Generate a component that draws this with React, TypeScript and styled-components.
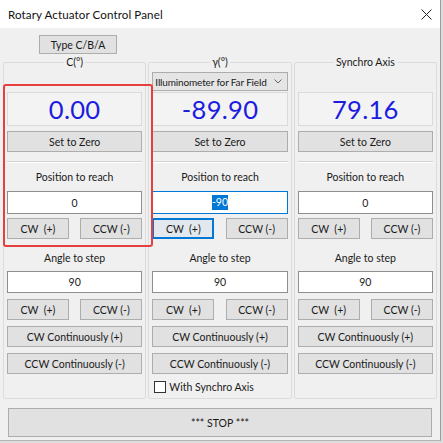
import React from "react";
import styled, { createGlobalStyle, css } from "styled-components";

const GlobalStyle = createGlobalStyle`
  html, body {
    margin: 0;
    padding: 0;
    background: #dcdcdc;
  }
  #root {
    width: 443px;
    height: 443px;
  }
  * { box-sizing: border-box; }
`;

const FONT = `"Lato", "Noto Sans", "DejaVu Sans", sans-serif`;

const Window = styled.div`
  position: relative;
  width: 441px;
  height: 441px;
  background: #f0f0f0;
  border-right: 1px solid #9d9d9d;
  border-bottom: 1px solid #b5b5b5;
  display: flex;
  flex-direction: column;
  font-family: ${FONT};
  color: #1a1a1a;
`;

const TitleBar = styled.div`
  height: 28px;
  flex: none;
  background: #ffffff;
  display: flex;
  align-items: center;
  justify-content: space-between;
  padding: 0 8px 0 8px;
`;

const Title = styled.span`
  font-size: 11.6px;
  color: #111;
  letter-spacing: 0.1px;
`;

const CloseGlyph = () => (
  <svg width="11" height="11" viewBox="0 0 11 11">
    <path d="M0.5 0.5 L10.5 10.5 M10.5 0.5 L0.5 10.5" stroke="#222" strokeWidth="1" fill="none" />
  </svg>
);

const Body = styled.div`
  flex: 1;
  display: flex;
  flex-direction: column;
  padding: 7px 3px 4px 3px;
`;

const TopRow = styled.div`
  display: flex;
  padding-left: 36px;
`;

const buttonBase = css`
  font-family: ${FONT};
  font-size: 10.5px;
  color: #1a1a1a;
  background: #e1e1e1;
  border: 1px solid #adadad;
  border-radius: 0;
  padding: 0;
  margin: 0;
  display: flex;
  align-items: center;
  justify-content: center;
  white-space: pre;
`;

const Button = styled.button<{ $w?: number; $h?: number; $focused?: boolean }>`
  ${buttonBase};
  width: ${(p) => (p.$w ? `${p.$w}px` : "100%")};
  height: ${(p) => p.$h ?? 21}px;
  flex: none;
  ${(p) =>
    p.$focused &&
    css`
      border-color: #0078d7;
      box-shadow: inset 0 0 0 1px #0078d7;
      background: #e3e8ee;
    `}
`;

const GroupRow = styled.div`
  display: flex;
  gap: 2px;
  margin-top: 1px;
`;

const Group = styled.fieldset`
  flex: 1;
  min-width: 0;
  margin: 0;
  border: 1px solid #dcdcdc;
  border-radius: 2px;
  padding: 3px 3px 5px 3px;
  display: flex;
  flex-direction: column;
`;

const Legend = styled.legend`
  margin: 0 auto;
  padding: 0 2px;
  font-size: 10.5px;
  line-height: 14px;
  color: #1a1a1a;
`;

const Slot = styled.div`
  height: 19px;
  flex: none;
`;

const Dropdown = styled.div`
  height: 19px;
  flex: none;
  background: #e5e5e5;
  border: 1px solid #acacac;
  display: flex;
  align-items: center;
  justify-content: space-between;
  gap: 4px;
  padding: 0 5px 0 2px;
  font-size: 10px;
  letter-spacing: -0.15px;
  white-space: nowrap;
  overflow: hidden;
`;

const DropdownText = styled.span`
  overflow: hidden;
  min-width: 0;
`;

const Chevron = () => (
  <svg width="8" height="5" viewBox="0 0 8 5" style={{ flex: "none" }}>
    <path d="M0.5 0.5 L4 4 L7.5 0.5" stroke="#606060" strokeWidth="1" fill="none" />
  </svg>
);

const ValueBox = styled.div`
  margin-top: 1px;
  height: 34px;
  flex: none;
  background: #f3f3f3;
  border: 1px solid #dadada;
  display: flex;
  align-items: center;
  justify-content: center;
  font-size: 25.5px;
  color: #1c1ce0;
  letter-spacing: 0.3px;
`;

const Separator = styled.div`
  margin-top: 9px;
  height: 2px;
  flex: none;
  border-top: 1px solid #d2d2d2;
  border-bottom: 1px solid #ffffff;
`;

const Caption = styled.div<{ $top: number }>`
  margin-top: ${(p) => p.$top}px;
  height: 16px;
  line-height: 16px;
  text-align: center;
  font-size: 10.5px;
  flex: none;
`;

const TextBox = styled.div<{ $h: number; $focused?: boolean }>`
  height: ${(p) => p.$h}px;
  flex: none;
  background: #ffffff;
  border: 1px solid ${(p) => (p.$focused ? "#0078d7" : "#8e8e8e")};
  display: flex;
  align-items: center;
  justify-content: center;
  font-size: 10.5px;
`;

const Selected = styled.span`
  background: #0078d7;
  color: #ffffff;
  padding: 1px 0;
  line-height: 13px;
`;

const ButtonPair = styled.div<{ $top: number }>`
  margin-top: ${(p) => p.$top}px;
  display: flex;
  justify-content: space-between;
`;

const Stack = styled.div<{ $top: number }>`
  margin-top: ${(p) => p.$top}px;
  flex: none;
`;

const CheckRow = styled.label`
  margin-top: 7px;
  display: flex;
  align-items: center;
  gap: 3px;
  height: 12px;
  padding-left: 2px;
  font-size: 10.5px;
`;

const CheckSquare = styled.span`
  width: 12px;
  height: 12px;
  background: #ffffff;
  border: 1px solid #333333;
  flex: none;
`;

const StopButton = styled.button`
  ${buttonBase};
  margin: 9px 5px 0 5px;
  height: 29px;
  font-size: 10.5px;
`;

const Highlight = styled.div`
  position: absolute;
  left: 3px;
  top: 84px;
  width: 150px;
  height: 163px;
  border: 2px solid #e5403f;
  border-radius: 3px;
  pointer-events: none;
`;

type AxisProps = {
  title: string;
  value: string;
  position: string;
  step: string;
  dropdown?: string;
  focused?: boolean;
  synchroOption?: boolean;
};

const Axis: React.FC<AxisProps> = ({ title, value, position, step, dropdown, focused, synchroOption }) => (
  <Group>
    <Legend>{title}</Legend>
    {dropdown ? (
      <Dropdown>
        <DropdownText>{dropdown}</DropdownText>
        <Chevron />
      </Dropdown>
    ) : (
      <Slot />
    )}
    <ValueBox>{value}</ValueBox>
    <Stack $top={5}>
      <Button>Set to Zero</Button>
    </Stack>
    <Separator />
    <Caption $top={6}>Position to reach</Caption>
    <Stack $top={6}>
      <TextBox $h={23} $focused={focused}>
        {focused ? <Selected>{position}</Selected> : position}
      </TextBox>
    </Stack>
    <ButtonPair $top={4}>
      <Button $w={62} $focused={focused}>{"CW  (+)"}</Button>
      <Button $w={62}>CCW (-)</Button>
    </ButtonPair>
    <Caption $top={11}>Angle to step</Caption>
    <Stack $top={5}>
      <TextBox $h={22}>{step}</TextBox>
    </Stack>
    <ButtonPair $top={6}>
      <Button $w={62}>{"CW  (+)"}</Button>
      <Button $w={62}>CCW (-)</Button>
    </ButtonPair>
    <Stack $top={6}>
      <Button>CW Continuously (+)</Button>
    </Stack>
    <Stack $top={6}>
      <Button>CCW Continuously (-)</Button>
    </Stack>
    {synchroOption && (
      <CheckRow>
        <CheckSquare />
        With Synchro Axis
      </CheckRow>
    )}
  </Group>
);

export default function App() {
  return (
    <>
      <GlobalStyle />
      <Window>
        <TitleBar>
          <Title>Rotary Actuator Control Panel</Title>
          <CloseGlyph />
        </TitleBar>
        <Body>
          <TopRow>
            <Button $w={78} $h={19}>Type C/B/A</Button>
          </TopRow>
          <GroupRow>
            <Axis title="C(°)" value="0.00" position="0" step="90" />
            <Axis
              title="γ(°)"
              value="-89.90"
              position="-90"
              step="90"
              dropdown="Illuminometer for Far Field"
              focused
              synchroOption
            />
            <Axis title="Synchro Axis" value="79.16" position="0" step="90" />
          </GroupRow>
          <StopButton>*** STOP ***</StopButton>
        </Body>
        <Highlight />
      </Window>
    </>
  );
}
